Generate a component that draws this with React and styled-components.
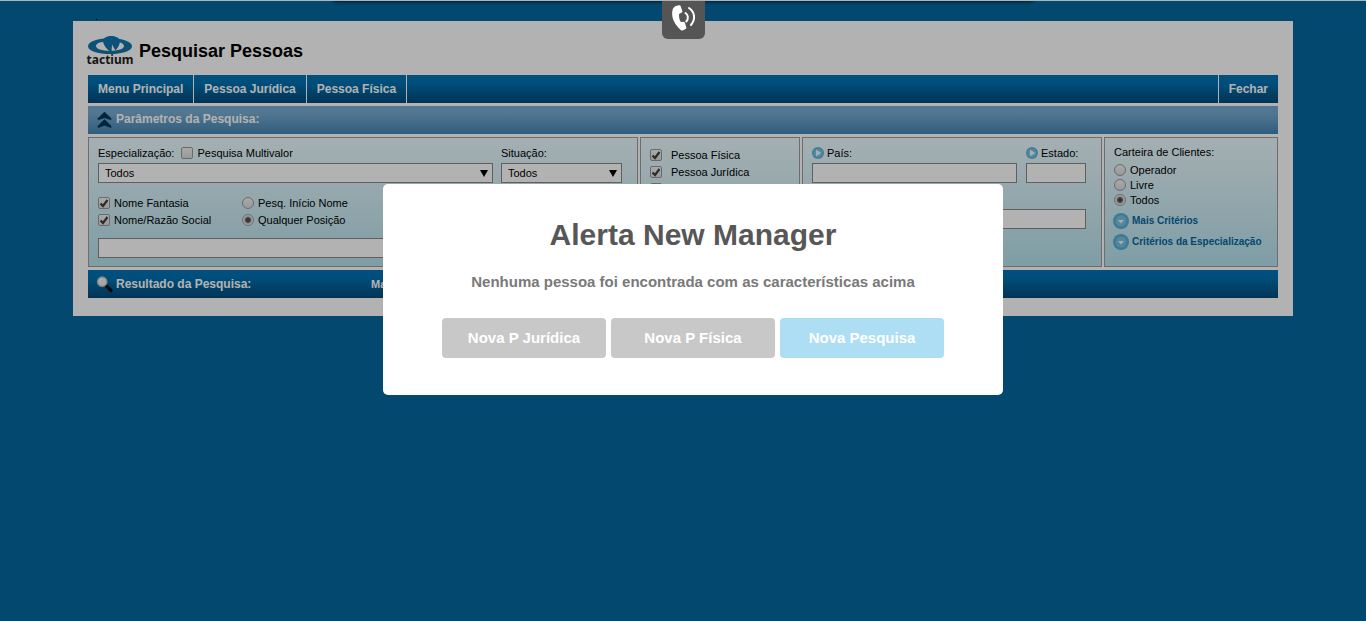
import React from "react";
import styled, { createGlobalStyle, css } from "styled-components";

const Global = createGlobalStyle`
  *, *::before, *::after { box-sizing: border-box; }
  body {
    margin: 0;
    background: #0468a0;
    color: #000;
    font: 11px/14px "Liberation Sans", Arial, sans-serif;
  }
  input, select, button { font: inherit; color: inherit; margin: 0; }
`;

const navy = "linear-gradient(#0073b4 0%, #0070b0 30%, #034a7a 100%)";

const TopStrip = styled.header`
  height: 21px;
  border-top: 1px solid #fff;
  padding: 0 20px;
`;
const Wrap = styled.div`
  max-width: 1220px;
  margin: 0 auto;
`;
const Dot = styled.span`
  display: block;
  padding-left: 22px;
  line-height: 30px;
  height: 20px;
`;
const Sheet = styled.main`
  background: #fff;
  padding: 15px 15px 18px;
  display: flex;
  flex-direction: column;
  gap: 3px;
`;
const Brand = styled.div`
  display: flex;
  gap: 7px;
  height: 36px;
`;
const PageTitle = styled.h1`
  margin: 0;
  font-size: 18px;
  line-height: 30px;
  font-weight: 700;
`;
const MenuBar = styled.nav`
  display: flex;
  height: 28px;
  background: ${navy};
`;
const MenuItem = styled.button`
  border: 0;
  border-${(p) => (p.$end ? "left" : "right")}: 1px solid #fff;
  margin-left: ${(p) => (p.$end ? "auto" : 0)};
  padding: 0 10px;
  background: none;
  color: #fff;
  font-size: 12px;
  font-weight: 700;
  white-space: nowrap;
`;
const SectionBar = styled.div`
  display: flex;
  align-items: center;
  height: 28px;
  padding: 0 8px;
  color: #fff;
  background: ${(p) => (p.$light ? "linear-gradient(#79abd0 0%, #79abd0 25%, #4385b4 100%)" : navy)};
`;
const SectionTitle = styled.h2`
  margin: 0 0 ${(p) => (p.$raised ? 3 : 1)}px 3px;
  font-size: 12px;
  font-weight: 700;
  width: 255px;
`;
const Panels = styled.form`
  display: grid;
  grid-template-columns: minmax(0, 1fr) 160px 300px 174px;
  gap: 2px;
`;
const Panel = styled.fieldset`
  min-width: 0;
  min-height: 130px;
  margin: 0;
  border: 1px solid #9c9c9c;
  padding: 8px 15px 8px 9px;
  background: linear-gradient(#ecfbff, #b6e2ed);
`;
const Columns = styled.div`
  display: grid;
  grid-template-columns: ${(p) => p.$cols};
  column-gap: ${(p) => p.$gap}px;
`;
const Line = styled.div`
  display: flex;
  align-items: center;
  gap: ${(p) => p.$gap || 4}px;
  height: ${(p) => p.$h || 17}px;
  white-space: nowrap;
`;
const Heading = styled(Line)`
  padding-bottom: 4px;
`;
const Stack = styled.div`
  display: flex;
  flex-direction: column;
  padding-top: ${(p) => p.$top || 0}px;
`;
const mark = css`
  appearance: none;
  flex: none;
  width: 12px;
  height: 12px;
  border: 1px solid #9a9a9a;
  background: linear-gradient(#f2f2f2, #dcdcdc);
`;
const Check = styled.input.attrs({ type: "checkbox" })`
  ${mark}
  border-radius: 2px;
  &:checked {
    background: url("data:image/svg+xml,%3Csvg xmlns='http://www.w3.org/2000/svg' viewBox='0 0 10 10'%3E%3Cpath d='M1.5 5.5 4 8 8.5 2' fill='none' stroke='%23404040' stroke-width='2.2'/%3E%3C/svg%3E"), linear-gradient(#f2f2f2, #dcdcdc);
  }
`;
const Radio = styled.input.attrs({ type: "radio" })`
  ${mark}
  border-radius: 50%;
  &:checked {
    background: radial-gradient(circle, #505050 0 2px, #e6e6e6 4px);
  }
`;
const Field = styled.input.attrs({ type: "text" })`
  display: block;
  width: 100%;
  height: 20px;
  border: 1px solid #888;
  border-radius: 0;
  padding: 0 6px;
  background: #fff;
`;
const SelectBox = styled.span`
  position: relative;
  display: block;
  &::after {
    content: "";
    position: absolute;
    right: 5px;
    top: 7px;
    border: 4px solid transparent;
    border-top: 7px solid #000;
    border-bottom: 0;
    pointer-events: none;
  }
`;
const Select = styled.select`
  appearance: none;
  display: block;
  width: 100%;
  height: 20px;
  border: 1px solid #888;
  border-radius: 0;
  padding: 0 6px;
  background: #fff;
`;
const MoreLink = styled.a`
  display: flex;
  align-items: center;
  gap: 3px;
  height: 21px;
  margin-left: -1px;
  color: #0468a0;
  font-size: 10px;
  font-weight: 700;
  text-decoration: none;
  white-space: nowrap;
`;
const ResultNote = styled.span`
  font-weight: 700;
`;
const Overlay = styled.div`
  position: fixed;
  inset: 0;
  background: rgba(0, 0, 0, 0.3);
`;
const DrawerEdge = styled.div`
  position: absolute;
  top: -9px;
  left: 50%;
  width: 700px;
  height: 10px;
  transform: translateX(-50%);
  box-shadow: 0 0 4px #000;
  clip-path: inset(10px -4px -6px -4px);
`;
const PhoneTab = styled.button`
  position: fixed;
  top: 1px;
  left: 50%;
  margin-left: -21px;
  width: 43px;
  height: 38px;
  border: 0;
  border-radius: 0 0 6px 6px;
  padding: 0;
  background: #555;
`;
const Dialog = styled.section`
  position: fixed;
  top: 184px;
  left: 50%;
  margin-left: -300px;
  width: 620px;
  padding: 31px 17px 37px;
  border-radius: 5px;
  background: #fff;
  text-align: center;
`;
const DialogTitle = styled.h2`
  margin: 0 0 22px;
  color: #575757;
  font-size: 30px;
  line-height: 40px;
`;
const DialogText = styled.p`
  margin: 0 0 31px;
  color: #797979;
  font-size: 15px;
  line-height: 10px;
  font-weight: 700;
`;
const Actions = styled.div`
  display: flex;
  justify-content: center;
  gap: 5px;
`;
const Action = styled.button`
  width: 164px;
  height: 40px;
  border: 0;
  border-radius: 4px;
  background: ${(p) => (p.$primary ? "#aedef4" : "#c8c8c8")};
  color: #fff;
  font-size: 15px;
  font-weight: 700;
`;

const LogoMark = styled.div`
  width: 44px;
  display: flex;
  flex-direction: column;
  align-items: center;
`;
const LogoName = styled.span`
  font: 700 12px/12px "Noto Sans", "Open Sans", sans-serif;
  color: #222;
`;

function Logo() {
  return (
    <LogoMark>
      <svg width="44" height="18" viewBox="0 0 44 18" aria-hidden="true">
        <defs>
          <linearGradient id="brand" x1="0" y1="0" x2="0" y2="1">
            <stop offset="0" stopColor="#0878bd" />
            <stop offset="1" stopColor="#1b729c" />
          </linearGradient>
        </defs>
        <path
          fill="url(#brand)"
          fillRule="evenodd"
          d="M22 2.200C34 2.200 44 5.500 44 10.200S34 18 22 18 0 15 0 10.200 10 2.200 22 2.200zM22 5.200C14 5.200 8 6.800 8 10s6 4.800 14 4.800S36 13.200 36 10 30 5.200 22 5.200z"
        />
        <path
          fill="url(#brand)"
          d="M15 5C15.500 1.800 19 0 23.200 0S31.500 1.800 32 5c0 3-1.800 6.600-4.600 9.500L24 8.500l-.4 6.800-1.800.1C18.500 12.600 15.300 9 15 5z"
        />
      </svg>
      <LogoName>tactium</LogoName>
    </LogoMark>
  );
}

function PlayIcon() {
  return (
    <svg width="12" height="12" viewBox="0 0 12 12" aria-hidden="true">
      <circle cx="6" cy="6" r="6" fill="#5cb4d8" />
      <circle cx="6" cy="6" r="4.300" fill="#7cc4e0" />
      <path d="M4 2.800 9.300 6 4 9.200z" fill="#eefaff" />
    </svg>
  );
}

function DownIcon() {
  return (
    <svg width="16" height="16" viewBox="0 0 16 16" aria-hidden="true">
      <circle cx="8" cy="8" r="8" fill="#55b0d8" />
      <circle cx="8" cy="8" r="5.500" fill="#78c2e0" />
      <path d="M5 7h6l-3 3.500z" fill="#eefaff" />
    </svg>
  );
}

function CollapseIcon() {
  return (
    <svg width="17" height="16" viewBox="0 0 17 16" aria-hidden="true">
      <path d="M8.500 0 15 6.500v1.300L8.500 5.800 2 7.800V6.500zM8.500 7.500 15 14v1.500l-6.500-2.200L2 15.500V14z" fill="#003455" stroke="#003455" strokeWidth=".6" />
    </svg>
  );
}

function SearchIcon() {
  return (
    <svg width="17" height="17" viewBox="0 0 17 17" aria-hidden="true">
      <path d="m10 9.500 5 5" stroke="#111" strokeWidth="3.200" strokeLinecap="round" />
      <circle cx="6.200" cy="5.700" r="4.700" fill="#f1f1f1" stroke="#b9b9b9" strokeWidth="1.400" />
      <path d="M3.500 5.500a2.800 2.800 0 0 1 2.700-2.700" fill="none" stroke="#fff" strokeWidth="1.200" />
    </svg>
  );
}

function PhoneIcon() {
  return (
    <svg width="43" height="36" viewBox="0 0 43 36" aria-hidden="true">
      <path
        d="M14 5 17 4.200c.8-.2 1.300.1 1.600.9l1.700 5c.2.700 0 1.200-.6 1.500l-2.600 1.300c-.3 3 .3 5.600 1.700 8.200l2.900-.3c.6 0 1 .3 1.200.9l1.400 4.700c.2.800-.1 1.300-.8 1.600l-2.300 1.200c-1 .5-2 .3-2.800-.5C11.400 22.600 9 15 10.600 8.800 11.100 7 12.300 5.600 14 5z"
        fill="#fff"
      />
      <path d="M23.500 12c2.800 1.800 3.200 5.800.8 8.500M27 7c6 4 6.700 11.500 2 17" fill="none" stroke="#fff" strokeWidth="2" strokeLinecap="round" />
    </svg>
  );
}

function Option({ control: Control, label, gap, h, ...rest }) {
  return (
    <Line as="label" $gap={gap} $h={h}>
      <Control {...rest} />
      {label}
    </Line>
  );
}

function Choice({ id }) {
  return (
    <SelectBox>
      <Select id={id}>
        <option>Todos</option>
      </Select>
    </SelectBox>
  );
}

export default function App() {
  return (
    <>
      <Global />
      <TopStrip>
        <Wrap><Dot>.</Dot></Wrap>
      </TopStrip>
      <Wrap>
        <Sheet>
          <Brand>
            <Logo />
            <PageTitle>Pesquisar Pessoas</PageTitle>
          </Brand>
          <MenuBar>
            <MenuItem>Menu Principal</MenuItem>
            <MenuItem>Pessoa Jurídica</MenuItem>
            <MenuItem>Pessoa Física</MenuItem>
            <MenuItem $end>Fechar</MenuItem>
          </MenuBar>
          <SectionBar $light>
            <CollapseIcon />
            <SectionTitle $raised>Parâmetros da Pesquisa:</SectionTitle>
          </SectionBar>
          <Panels onSubmit={(e) => e.preventDefault()}>
            <Panel>
              <Columns $cols="minmax(0, 1fr) 121px" $gap={8}>
                <Heading $gap={7}>
                  <label htmlFor="espec">Especialização:</label>
                  <Option control={Check} label="Pesquisa Multivalor" />
                </Heading>
                <Heading as="label" htmlFor="situacao">Situação:</Heading>
                <Choice id="espec" />
                <Choice id="situacao" />
              </Columns>
              <Stack $top={11}>
                <Columns $cols="140px 1fr" $gap={4}>
                  <Option control={Check} defaultChecked label="Nome Fantasia" />
                  <Option control={Radio} name="posicao" label="Pesq. Início Nome" />
                  <Option control={Check} defaultChecked label="Nome/Razão Social" />
                  <Option control={Radio} name="posicao" defaultChecked label="Qualquer Posição" />
                </Columns>
              </Stack>
              <Stack $top={10}>
                <Field aria-label="Nome" />
              </Stack>
            </Panel>
            <Panel>
              <Option control={Check} defaultChecked gap={9} label="Pessoa Física" />
              <Option control={Check} defaultChecked gap={9} label="Pessoa Jurídica" />
              <Line><Check aria-label="Contato" /></Line>
            </Panel>
            <Panel>
              <Columns $cols="minmax(0, 1fr) 60px" $gap={9}>
                <Heading as="label" htmlFor="pais" $gap={3}><PlayIcon />País:</Heading>
                <Heading as="label" htmlFor="estado" $gap={3}><PlayIcon />Estado:</Heading>
                <Field id="pais" />
                <Field id="estado" />
              </Columns>
              <Stack $top={26}>
                <Field aria-label="Cidade" />
              </Stack>
            </Panel>
            <Panel>
              <Heading $h={16}>Carteira de Clientes:</Heading>
              <Option control={Radio} name="carteira" h={15} label="Operador" />
              <Option control={Radio} name="carteira" h={15} label="Livre" />
              <Option control={Radio} name="carteira" h={15} defaultChecked label="Todos" />
              <Stack $top={3}>
                <MoreLink href="#mais"><DownIcon />Mais Critérios</MoreLink>
                <MoreLink href="#especializacao"><DownIcon />Critérios da Especialização</MoreLink>
              </Stack>
            </Panel>
          </Panels>
          <SectionBar>
            <SearchIcon />
            <SectionTitle>Resultado da Pesquisa:</SectionTitle>
            <ResultNote>Ma</ResultNote>
          </SectionBar>
        </Sheet>
      </Wrap>
      <Overlay><DrawerEdge /></Overlay>
      <PhoneTab aria-label="Telefone"><PhoneIcon /></PhoneTab>
      <Dialog role="dialog" aria-labelledby="alerta">
        <DialogTitle id="alerta">Alerta New Manager</DialogTitle>
        <DialogText>Nenhuma pessoa foi encontrada com as características acima</DialogText>
        <Actions>
          <Action>Nova P Jurídica</Action>
          <Action>Nova P Física</Action>
          <Action $primary>Nova Pesquisa</Action>
        </Actions>
      </Dialog>
    </>
  );
}
